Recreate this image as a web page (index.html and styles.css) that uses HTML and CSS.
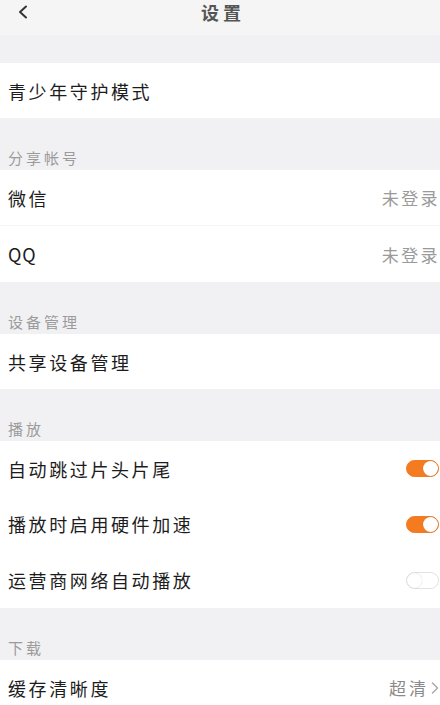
FILE: index.html
```html
<!DOCTYPE html>
<html lang="zh-CN">
<head>
    <meta charset="utf-8">
    <title>设置</title>
    <link rel="stylesheet" href="styles.css">
</head>
<body>
    <div class="page">
        <div class="topbar">
            <svg class="back" width="12" height="14" viewBox="0 0 12 14">
                <polyline points="9,1.5 3,7 9,12.5" fill="none" stroke="#333" stroke-width="2" stroke-linecap="round" stroke-linejoin="round"/>
            </svg>
            <div class="title">设置</div>
        </div>

        <div class="spacer"></div>
        <div class="group">
            <div class="row"><span class="label">青少年守护模式</span></div>
        </div>

        <div class="section">分享帐号</div>
        <div class="group">
            <div class="row line"><span class="label">微信</span><span class="value">未登录</span></div>
            <div class="row"><span class="label latin">QQ</span><span class="value">未登录</span></div>
        </div>

        <div class="section">设备管理</div>
        <div class="group">
            <div class="row"><span class="label">共享设备管理</span></div>
        </div>

        <div class="section">播放</div>
        <div class="group">
            <div class="row"><span class="label">自动跳过片头片尾</span><span class="switch on"></span></div>
            <div class="row"><span class="label">播放时启用硬件加速</span><span class="switch on"></span></div>
            <div class="row"><span class="label">运营商网络自动播放</span><span class="switch"></span></div>
        </div>

        <div class="section">下载</div>
        <div class="group">
            <div class="row">
                <span class="label">缓存清晰度</span>
                <span class="value dark">超清
                    <svg class="arrow" width="8" height="14" viewBox="0 0 8 14">
                        <polyline points="1.5,2 6.5,7 1.5,12" fill="none" stroke="#aaa" stroke-width="1.5" stroke-linecap="round" stroke-linejoin="round"/>
                    </svg>
                </span>
            </div>
        </div>
    </div>
</body>
</html>
```

FILE: styles.css
```css
body {
    margin: 0;
    background-color: #f1f1f4;
    font-family: "Noto Sans CJK SC", "Noto Sans", sans-serif;
    color: #1c1c1c;
    overflow: hidden;
}
.page {
    width: 440px;
}
.topbar {
    height: 35px;
    background-color: #f5f5f5;
    display: flex;
    align-items: center;
    justify-content: center;
    position: relative;
}
.back {
    position: absolute;
    left: 17px;
    top: 5px;
}
.title {
    font-size: 18px;
    font-weight: bold;
    color: #555;
    letter-spacing: 4px;
    margin-left: 6px;
    margin-top: -12px;
}
.spacer {
    height: 28px;
}
.group {
    background-color: #ffffff;
}
.row {
    height: 55px;
    display: flex;
    align-items: center;
    justify-content: space-between;
    padding-left: 8px;
    overflow: hidden;
}
.group .row + .row {
    height: 56px;
}
.row.line {
    border-bottom: 1px solid #f6f6f6;
}
.label {
    font-size: 18px;
    letter-spacing: 2.6px;
    white-space: nowrap;
}
.label.latin {
    letter-spacing: 1px;
}
.value {
    font-size: 17px;
    letter-spacing: 2.4px;
    color: #9a9a9a;
    white-space: nowrap;
    display: flex;
    align-items: center;
}
.value.dark {
    color: #8a8a8a;
    letter-spacing: 3px;
}
.arrow {
    margin-left: 2px;
    margin-right: 1px;
}
.section {
    height: 52px;
    box-sizing: border-box;
    display: flex;
    align-items: flex-end;
    padding: 0 0 2px 8px;
    font-size: 15px;
    line-height: 20px;
    letter-spacing: 3px;
    color: #9b9b9b;
}
.switch {
    width: 33px;
    height: 17px;
    border-radius: 9px;
    box-sizing: border-box;
    border: 1px solid #e2e2e2;
    background-color: #fff;
    position: relative;
    margin-right: 1px;
}
.switch::after {
    content: "";
    position: absolute;
    top: 0;
    left: 0;
    width: 15px;
    height: 15px;
    border-radius: 50%;
    background-color: #fff;
    box-shadow: 0 0 1px rgba(0, 0, 0, 0.25);
}
.switch.on {
    background-color: #f47b20;
    border-color: #f47b20;
}
.switch.on::after {
    left: 16px;
}
```
